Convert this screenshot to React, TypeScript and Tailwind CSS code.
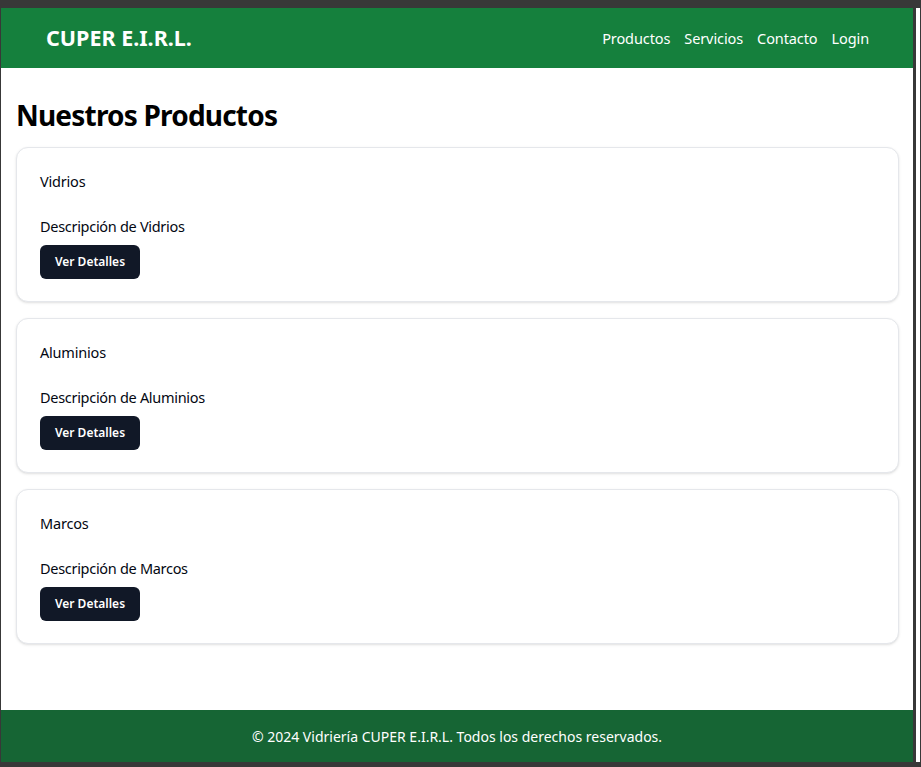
const products = ["Vidrios", "Aluminios", "Marcos"]

const NavLink = ({ label }: { label: string }) => (
  <a href="#" className="text-[14.5px] tracking-[-0.1px] text-white hover:underline">
    {label}
  </a>
)

const ProductCard = ({ name }: { name: string }) => (
  <div className="rounded-xl border border-gray-200 bg-white px-[23px] pt-[21px] pb-[22px] shadow-sm">
    <div className="text-[14.5px] leading-6 tracking-[-0.2px] text-gray-950">{name}</div>
    <p className="mt-[21px] text-[14.5px] leading-6 tracking-[-0.3px] text-gray-950">Descripción de {name}</p>
    <button className="mt-[7px] h-[34px] w-[100px] rounded-md bg-[#111827] text-[12px] font-semibold text-white">
      Ver Detalles
    </button>
  </div>
)

const App = () => {
  return (
    <div
      className="flex h-[767px] w-[921px] bg-[#383838] pt-2 pb-[5px] pl-px"
      style={{ fontFamily: '"Segoe UI", "Noto Sans", sans-serif' }}
    >
      <div className="flex w-[912px] flex-col bg-white">
        <header className="flex h-[60px] items-center justify-between bg-[#15803d] pl-[45px] pr-[44px]">
          <h1 className="text-[21.5px] font-bold text-white">CUPER E.I.R.L.</h1>
          <nav className="flex gap-[14px] pt-[2px]">
            <NavLink label="Productos" />
            <NavLink label="Servicios" />
            <NavLink label="Contacto" />
            <NavLink label="Login" />
          </nav>
        </header>

        <main className="flex-1 pl-[15px] pr-[14px] pt-[29px]">
          <h2 className="text-[28px] leading-9 tracking-[-0.8px] font-bold text-black">Nuestros Productos</h2>
          <div className="mt-[14px] flex flex-col gap-4">
            {products.map((p) => (
              <ProductCard key={p} name={p} />
            ))}
          </div>
        </main>

        <footer className="flex h-[52px] items-center justify-center bg-[#166534] text-[14px] text-white">
          © 2024 Vidriería CUPER E.I.R.L. Todos los derechos reservados.
        </footer>
      </div>
      <div className="w-[4px] bg-white ml-[3px]" />
    </div>
  )
}

export default App
